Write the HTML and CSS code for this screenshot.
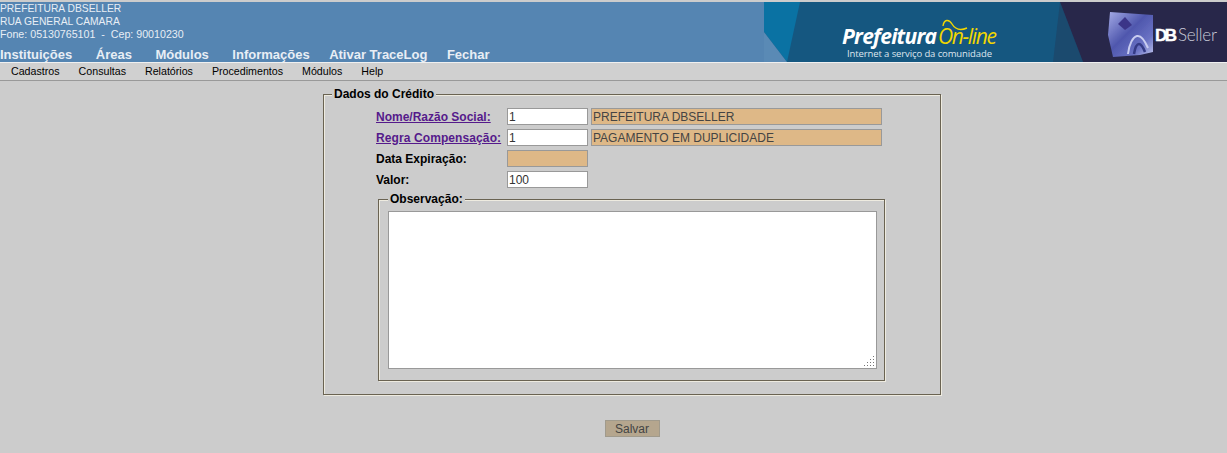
FILE: index.html
```html
<!DOCTYPE html>
<html lang="en">

<head>
    <meta charset="UTF-8">
    <title>Dados do Crédito</title>
    <link rel="stylesheet" href="styles.css">
</head>

<body>
    <header class="topo">
        <div class="topo-info">
            <div class="instituicao">
                <div>PREFEITURA DBSELLER</div>
                <div>RUA GENERAL CAMARA</div>
                <div class="fone">Fone: 05130765101 &nbsp;-&nbsp; Cep: 90010230</div>
            </div>
            <nav class="menu-topo">
                <a>Instituições</a>
                <a>Áreas</a>
                <a>Módulos</a>
                <a>Informações</a>
                <a class="curto">Ativar TraceLog</a>
                <a class="curto">Fechar</a>
            </nav>
        </div>
        <svg class="banner" width="463" height="60" viewBox="0 0 463 60">
            <defs>
                <linearGradient id="cubo" x1="0" y1="0" x2="1" y2="1">
                    <stop offset="0" stop-color="#a4aae6" />
                    <stop offset="0.45" stop-color="#4f57ad" />
                    <stop offset="0.75" stop-color="#6a72c4" />
                    <stop offset="1" stop-color="#c3c8ee" />
                </linearGradient>
                <filter id="suave">
                    <feGaussianBlur stdDeviation="0.6" />
                </filter>
            </defs>
            <rect width="463" height="60" fill="#155780" />
            <polygon points="0,0 36,0 23,60 0,30" fill="#0a72a3" />
            <polygon points="0,30 23,60 0,60" fill="#5a8ab5" />
            <polygon points="296,0 289,60 319,60" fill="#1b4a6e" />
            <polygon points="296,0 463,0 463,60 319,60" fill="#28274a" />
            <g filter="url(#suave)">
                <polygon points="346,10 389,13 389,50 376,53 349,55 344,33" fill="url(#cubo)" />
                <polygon points="361,15 368,23 361,28 354,22" fill="#3b3688" />
                <path d="M364 52c1-10 5-17 9-18s8 5 11 12" fill="none" stroke="#c9cdf0" stroke-width="2" />
                <path d="M370 52c1-6 3-10 5-10s4 3 6 8" fill="none" stroke="#343a86" stroke-width="2.5" />
            </g>
            <text x="78" y="42" class="b-pref" textLength="95">Prefeitura</text>
            <text x="174" y="42" class="b-online" textLength="59">On-line</text>
            <path d="M179 24C180 17 185 17 188 22S196 29 203 26" fill="none" stroke="#f2d600" stroke-width="1.4" />
            <text x="83" y="55" class="b-slogan" textLength="145">Internet a serviço da comunidade</text>
            <text x="391" y="39" class="b-db" textLength="22">DB</text>
            <text x="414" y="39" class="b-seller" textLength="39">Seller</text>
        </svg>
    </header>

    <nav class="menu-sub">
        <a>Cadastros</a>
        <a>Consultas</a>
        <a>Relatórios</a>
        <a>Procedimentos</a>
        <a>Módulos</a>
        <a>Help</a>
    </nav>

    <main class="conteudo">
        <fieldset class="grupo">
            <legend>Dados do Crédito</legend>
            <div class="campos">
                <div class="linha">
                    <a class="rotulo link">Nome/Razão Social:</a>
                    <input class="cod" type="text" value="1">
                    <input class="desc" type="text" value="PREFEITURA DBSELLER" disabled>
                </div>
                <div class="linha">
                    <a class="rotulo link largo">Regra Compensação:</a>
                    <input class="cod" type="text" value="1">
                    <input class="desc" type="text" value="PAGAMENTO EM DUPLICIDADE" disabled>
                </div>
                <div class="linha">
                    <span class="rotulo">Data Expiração:</span>
                    <input class="cod" type="text" disabled>
                </div>
                <div class="linha">
                    <span class="rotulo">Valor:</span>
                    <input class="cod" type="text" value="100">
                </div>
                <fieldset class="obs">
                    <legend>Observação:</legend>
                    <div class="area">
                        <textarea></textarea>
                        <!-- pegador do textarea -->
                        <svg class="pegador" width="10" height="10" viewBox="0 0 10 10">
                            <path d="M9 0h1v1H9zM6 3h1v1H6zM9 3h1v1H9zM3 6h1v1H3zM6 6h1v1H6zM9 6h1v1H9zM0 9h1v1H0zM3 9h1v1H3zM6 9h1v1H6zM9 9h1v1H9z" fill="#777777" />
                        </svg>
                    </div>
                </fieldset>
            </div>
        </fieldset>
        <div class="acoes">
            <button class="salvar" type="button">Salvar</button>
        </div>
    </main>
</body>

</html>
```

FILE: styles.css
```css
body,
html {
    margin: 0;
    padding: 0;
}

body {
    background-color: #cccccc;
    color: black;
    font-family: "Liberation Sans", Arial, sans-serif;
    font-size: 12px;
    height: 453px;
    overflow: hidden;
}

.topo {
    display: flex;
    justify-content: space-between;
    height: 60px;
    margin-top: 2px;
    background-color: #5585b2;
    color: #e8eef5;
}

.instituicao {
    font-size: 10.3px;
    line-height: 13px;
}

.fone {
    font-size: 10.67px;
}

.menu-topo {
    display: flex;
    gap: 23.5px;
    margin-top: 6px;
    font-size: 13px;
    font-weight: bold;
    line-height: 15px;
}

.menu-topo .curto {
    margin-left: -4px;
}

.banner {
    display: block;
}

.b-pref {
    font-family: "Open Sans", sans-serif;
    font-size: 21px;
    font-weight: bold;
    font-style: italic;
    fill: white;
}

.b-online {
    font-family: "Open Sans", sans-serif;
    font-size: 21px;
    font-style: italic;
    fill: #f2d600;
}

.b-slogan {
    font-family: "Open Sans", sans-serif;
    font-size: 9.5px;
    fill: #dfe6ee;
}

.b-db {
    font-family: "Liberation Sans", sans-serif;
    font-size: 17px;
    font-weight: bold;
    fill: white;
    stroke: white;
    stroke-width: 0.4px;
}

.b-seller {
    font-family: Lato, "Liberation Sans", sans-serif;
    font-size: 17px;
    font-weight: 300;
    fill: #c9cbd8;
}

.menu-sub {
    display: flex;
    gap: 19px;
    height: 17px;
    padding-left: 11px;
    border-top: 1px solid #f0f0f0;
    border-bottom: 1px solid #999999;
    background-color: #d0d0d0;
    font-size: 10.67px;
    line-height: 17px;
}

.conteudo {
    padding: 6px 0 0 323px;
}

fieldset {
    margin: 0;
    box-sizing: border-box;
    border: 1px solid #6a6352;
    box-shadow: inset 1px 1px 0 #eeebe0, 1px 1px 0 #eeebe0;
}

legend {
    padding: 0 2px;
    background-color: #cccccc;
    font-weight: bold;
    line-height: 14px;
}

.grupo {
    width: 618px;
    height: 308px;
    padding: 7px 0 0 8px;
}

.campos {
    padding-left: 44px;
}

.linha {
    display: flex;
    gap: 3px;
    align-items: center;
    height: 17px;
    margin-bottom: 4px;
}

.rotulo {
    width: 128px;
    font-weight: bold;
}

.link {
    color: #551a8b;
    text-decoration: underline;
}

.largo {
    letter-spacing: 0.1px;
}

input {
    box-sizing: border-box;
    height: 17px;
    padding: 0 1px;
    border: 1px solid #999999;
    border-radius: 0;
    background-color: white;
    color: #333333;
    font-family: "Liberation Sans", Arial, sans-serif;
    font-size: 12px;
}

.cod {
    width: 81px;
}

.desc {
    width: 291px;
}

input:disabled {
    background-color: #deb887;
    color: #444444;
}

.obs {
    width: 507px;
    height: 189px;
    margin: 3px 0 0 2px;
    padding: 5px 0 0 9px;
}

.area {
    position: relative;
    width: 489px;
}

textarea {
    display: block;
    box-sizing: border-box;
    width: 489px;
    height: 158px;
    margin: 0;
    padding: 1px;
    border: 1px solid #999999;
    border-radius: 0;
    background-color: white;
    resize: none;
}

.pegador {
    position: absolute;
    right: 3px;
    bottom: 3px;
}

.acoes {
    display: flex;
    justify-content: center;
    width: 618px;
    margin-top: 25px;
}

.salvar {
    box-sizing: border-box;
    width: 55px;
    height: 17px;
    padding: 0;
    border: 1px solid #a09a8c;
    background-color: #b5a68e;
    color: #444444;
    font-family: "Liberation Sans", Arial, sans-serif;
    font-size: 12px;
}
```
